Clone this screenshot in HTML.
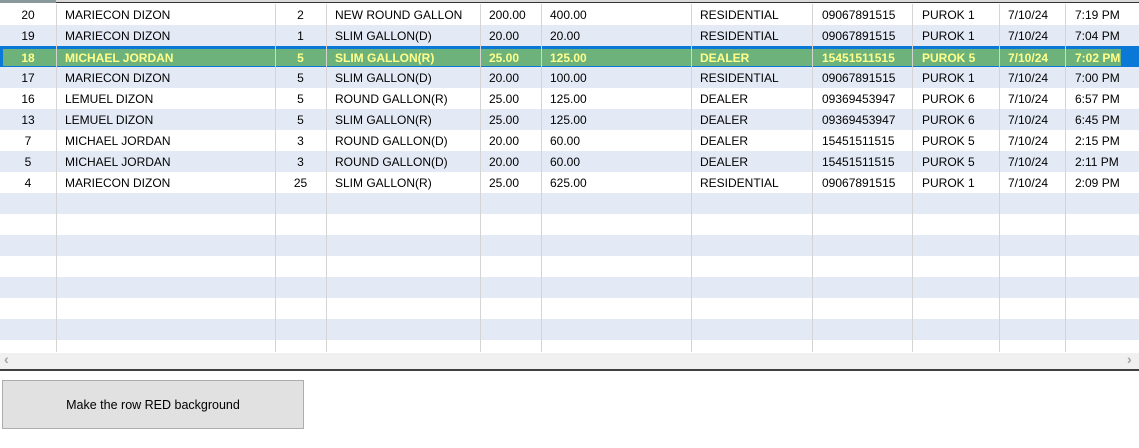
<!DOCTYPE html>
<html><head><meta charset="utf-8"><style>
*{margin:0;padding:0;box-sizing:border-box}
body{width:1139px;height:448px;background:#fff;position:relative;overflow:hidden;font-family:"Liberation Sans",sans-serif;font-size:12px;color:#000}
.hdr{position:absolute;left:0;top:0;width:1139px;height:3px;background:#d9d9d9;border-bottom:1px solid #333}
.hdr0{position:absolute;left:0;top:0;width:56px;height:3px;background:#8a9a9c}
.row{position:absolute;left:0;width:1139px;height:21px}
.b{background:#e4eaf5}
.c{position:absolute;top:0;height:21px;line-height:23px;white-space:nowrap;overflow:hidden}
.vl{position:absolute;top:4px;height:348px;width:1px;background:#d4d4d4}
.sel{position:absolute;left:0;top:46px;width:1139px;height:21px;background:#0a78d7}
.selg{position:absolute;left:3px;top:49px;width:1118px;height:17px;background:#6db27a}
.selrow .c{color:#ffff8c;font-weight:bold}
.sb{position:absolute;left:0;top:353px;width:1139px;height:16px;background:#f0f0f0;color:#a0a0a0;font-size:14px;font-weight:bold}
.line{position:absolute;left:0;top:369px;width:1139px;height:2px;background:#404040}
.btn{position:absolute;left:2px;top:380px;width:302px;height:49px;background:#e1e1e1;border:1px solid #adadad;text-align:center;line-height:49px;font-size:12.5px}
</style></head><body>
<div class="hdr"></div><div class="hdr0"></div>

<div class="row" style="top:4px"></div>
<div class="row b" style="top:25px"></div>
<div class="row b" style="top:67px"></div>
<div class="row b" style="top:109px"></div>
<div class="row b" style="top:151px"></div>
<div class="row b" style="top:193px"></div>
<div class="row b" style="top:235px"></div>
<div class="row b" style="top:277px"></div>
<div class="row b" style="top:319px"></div>
<div class="sel"></div><div class="selg"></div>

<div class="vl" style="left:56px"></div>
<div class="vl" style="left:275px"></div>
<div class="vl" style="left:326px"></div>
<div class="vl" style="left:480px"></div>
<div class="vl" style="left:541px"></div>
<div class="vl" style="left:691px"></div>
<div class="vl" style="left:812px"></div>
<div class="vl" style="left:912px"></div>
<div class="vl" style="left:999px"></div>
<div class="vl" style="left:1065px"></div>

<div class="row" style="top:4px"><div class="c" style="left:0;width:56px;text-align:center">20</div><div class="c" style="left:65px">MARIECON DIZON</div><div class="c" style="left:275px;width:51px;text-align:center">2</div><div class="c" style="left:335px">NEW ROUND GALLON</div><div class="c" style="left:489px">200.00</div><div class="c" style="left:550px">400.00</div><div class="c" style="left:700px">RESIDENTIAL</div><div class="c" style="left:822px">09067891515</div><div class="c" style="left:922px">PUROK 1</div><div class="c" style="left:1008px">7/10/24</div><div class="c" style="left:1075px">7:19 PM</div></div>
<div class="row" style="top:25px"><div class="c" style="left:0;width:56px;text-align:center">19</div><div class="c" style="left:65px">MARIECON DIZON</div><div class="c" style="left:275px;width:51px;text-align:center">1</div><div class="c" style="left:335px">SLIM GALLON(D)</div><div class="c" style="left:489px">20.00</div><div class="c" style="left:550px">20.00</div><div class="c" style="left:700px">RESIDENTIAL</div><div class="c" style="left:822px">09067891515</div><div class="c" style="left:922px">PUROK 1</div><div class="c" style="left:1008px">7/10/24</div><div class="c" style="left:1075px">7:04 PM</div></div>
<div class="row selrow" style="top:46px;height:22px"><div class="c" style="left:0;width:56px;text-align:center;top:1px">18</div><div class="c" style="left:65px;top:1px">MICHAEL JORDAN</div><div class="c" style="left:275px;width:51px;text-align:center;top:1px">5</div><div class="c" style="left:335px;top:1px">SLIM GALLON(R)</div><div class="c" style="left:489px;top:1px">25.00</div><div class="c" style="left:550px;top:1px">125.00</div><div class="c" style="left:700px;top:1px">DEALER</div><div class="c" style="left:822px;top:1px">15451511515</div><div class="c" style="left:922px;top:1px">PUROK 5</div><div class="c" style="left:1008px;top:1px">7/10/24</div><div class="c" style="left:1075px;top:1px">7:02 PM</div></div>
<div class="row" style="top:67px"><div class="c" style="left:0;width:56px;text-align:center">17</div><div class="c" style="left:65px">MARIECON DIZON</div><div class="c" style="left:275px;width:51px;text-align:center">5</div><div class="c" style="left:335px">SLIM GALLON(D)</div><div class="c" style="left:489px">20.00</div><div class="c" style="left:550px">100.00</div><div class="c" style="left:700px">RESIDENTIAL</div><div class="c" style="left:822px">09067891515</div><div class="c" style="left:922px">PUROK 1</div><div class="c" style="left:1008px">7/10/24</div><div class="c" style="left:1075px">7:00 PM</div></div>
<div class="row" style="top:88px"><div class="c" style="left:0;width:56px;text-align:center">16</div><div class="c" style="left:65px">LEMUEL DIZON</div><div class="c" style="left:275px;width:51px;text-align:center">5</div><div class="c" style="left:335px">ROUND GALLON(R)</div><div class="c" style="left:489px">25.00</div><div class="c" style="left:550px">125.00</div><div class="c" style="left:700px">DEALER</div><div class="c" style="left:822px">09369453947</div><div class="c" style="left:922px">PUROK 6</div><div class="c" style="left:1008px">7/10/24</div><div class="c" style="left:1075px">6:57 PM</div></div>
<div class="row" style="top:109px"><div class="c" style="left:0;width:56px;text-align:center">13</div><div class="c" style="left:65px">LEMUEL DIZON</div><div class="c" style="left:275px;width:51px;text-align:center">5</div><div class="c" style="left:335px">SLIM GALLON(R)</div><div class="c" style="left:489px">25.00</div><div class="c" style="left:550px">125.00</div><div class="c" style="left:700px">DEALER</div><div class="c" style="left:822px">09369453947</div><div class="c" style="left:922px">PUROK 6</div><div class="c" style="left:1008px">7/10/24</div><div class="c" style="left:1075px">6:45 PM</div></div>
<div class="row" style="top:130px"><div class="c" style="left:0;width:56px;text-align:center">7</div><div class="c" style="left:65px">MICHAEL JORDAN</div><div class="c" style="left:275px;width:51px;text-align:center">3</div><div class="c" style="left:335px">ROUND GALLON(D)</div><div class="c" style="left:489px">20.00</div><div class="c" style="left:550px">60.00</div><div class="c" style="left:700px">DEALER</div><div class="c" style="left:822px">15451511515</div><div class="c" style="left:922px">PUROK 5</div><div class="c" style="left:1008px">7/10/24</div><div class="c" style="left:1075px">2:15 PM</div></div>
<div class="row" style="top:151px"><div class="c" style="left:0;width:56px;text-align:center">5</div><div class="c" style="left:65px">MICHAEL JORDAN</div><div class="c" style="left:275px;width:51px;text-align:center">3</div><div class="c" style="left:335px">ROUND GALLON(D)</div><div class="c" style="left:489px">20.00</div><div class="c" style="left:550px">60.00</div><div class="c" style="left:700px">DEALER</div><div class="c" style="left:822px">15451511515</div><div class="c" style="left:922px">PUROK 5</div><div class="c" style="left:1008px">7/10/24</div><div class="c" style="left:1075px">2:11 PM</div></div>
<div class="row" style="top:172px"><div class="c" style="left:0;width:56px;text-align:center">4</div><div class="c" style="left:65px">MARIECON DIZON</div><div class="c" style="left:275px;width:51px;text-align:center">25</div><div class="c" style="left:335px">SLIM GALLON(R)</div><div class="c" style="left:489px">25.00</div><div class="c" style="left:550px">625.00</div><div class="c" style="left:700px">RESIDENTIAL</div><div class="c" style="left:822px">09067891515</div><div class="c" style="left:922px">PUROK 1</div><div class="c" style="left:1008px">7/10/24</div><div class="c" style="left:1075px">2:09 PM</div></div>

<div class="sb"><span style="position:absolute;left:4px;top:-2px">&#8249;</span><span style="position:absolute;left:1127px;top:-2px">&#8250;</span></div>
<div class="line"></div>
<div class="btn">Make the row RED background</div>
</body></html>
